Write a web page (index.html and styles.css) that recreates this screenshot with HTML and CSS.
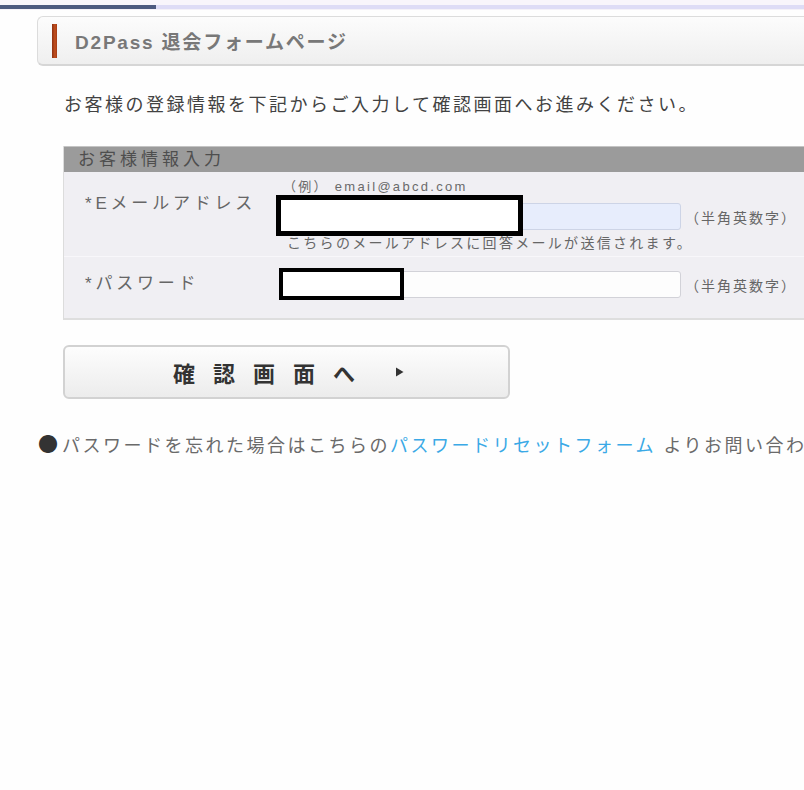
FILE: index.html
```html
<!DOCTYPE html>
<html lang="ja">
<head>
<meta charset="utf-8">
<title>D2Pass 退会フォームページ</title>
<link rel="stylesheet" href="styles.css">
</head>
<body>
<div class="topbar"><div class="progress"></div></div>
<div class="page">
  <div class="header">
    <span class="accent"></span>
    <h1 class="title">D2Pass 退会フォームページ</h1>
  </div>
  <p class="intro">お客様の登録情報を下記からご入力して確認画面へお進みください。</p>
  <div class="form-table">
    <div class="th">お客様情報入力</div>
    <div class="row row-email">
      <div class="label">*Eメールアドレス</div>
      <div class="field">
        <div class="example">（例） email@abcd.com</div>
        <div class="input-line">
          <div class="input-wrap">
            <div class="input input-blue"></div>
            <div class="redact redact-email"></div>
          </div>
          <span class="note">（半角英数字）</span>
        </div>
        <div class="hint">こちらのメールアドレスに回答メールが送信されます。</div>
      </div>
    </div>
    <div class="row row-pass">
      <div class="label">*パスワード</div>
      <div class="field">
        <div class="input-line">
          <div class="input-wrap">
            <div class="input"></div>
            <div class="redact redact-pass"></div>
          </div>
          <span class="note">（半角英数字）</span>
        </div>
      </div>
    </div>
  </div>
  <div class="button-row">
    <button class="confirm" type="button"><span class="btn-text">確認画面へ</span><svg class="tri" width="9" height="10" viewBox="0 0 9 10"><path d="M1 0.5 L8.5 5 L1 9.5 Z" fill="#333"/></svg></button>
  </div>
  <p class="forgot"><span class="bullet">●</span>パスワードを忘れた場合はこちらの<a class="link" href="#">パスワードリセットフォーム</a> よりお問い合わせください。</p>
</div>
</body>
</html>
```

FILE: styles.css
```css
html, body {
  margin: 0;
  padding: 0;
  background: #fefefe;
  overflow: hidden;
}
body {
  width: 804px;
  height: 790px;
  font-family: "Liberation Sans", "Noto Sans CJK JP", sans-serif;
  color: #555;
}
.topbar {
  height: 5px;
  padding-top: 5px;
  background: linear-gradient(#f8f5fb 0, #f8f5fb 5px, #dedcf6 5px, #dedcf6 9px, #f4f1f8 9px);
}
.progress {
  width: 156px;
  height: 4px;
  background: #4d5a80;
}
.page {
  padding-left: 37px;
}
.header {
  margin-top: 6px;
  height: 47px;
  border: 1px solid #dcdcdc;
  border-right: none;
  border-bottom: 2px solid #d6d6d6;
  border-radius: 6px 0 0 6px;
  background: linear-gradient(#fcfcfc, #efefef);
  display: flex;
  align-items: center;
  padding-left: 14px;
}
.accent {
  width: 5px;
  height: 34px;
  background: linear-gradient(90deg, #8e3010, #c2501f 60%, #a43a14);
  margin-right: 18px;
}
.title {
  margin: 0;
  font-size: 19px;
  font-weight: bold;
  color: #787878;
  letter-spacing: 1.8px;
}
.intro {
  margin: 27px 0 0 27px;
  font-size: 18px;
  line-height: 24px;
  letter-spacing: 2.5px;
  color: #424242;
  white-space: nowrap;
}
.form-table {
  margin: 29px 0 0 26px;
  border-left: 1px solid #dcdcdc;
  border-bottom: 2px solid #dedede;
}
.th {
  height: 25px;
  border-top: 1px solid #c4c4c4;
  background: #9b9b9b;
  color: #4e4e4e;
  font-size: 17px;
  line-height: 25px;
  letter-spacing: 4px;
  padding-left: 14px;
}
.row {
  display: grid;
  grid-template-columns: 213px 1fr;
  background: #f0eff3;
}
.row-pass {
  border-top: 1px solid #f8f7fa;
}
.label {
  padding-left: 21px;
  font-size: 17px;
  line-height: 24px;
  letter-spacing: 3.8px;
  color: #666;
  white-space: nowrap;
}
.row-email .label {
  padding-top: 20px;
}
.row-pass .label {
  padding-top: 15px;
}
.field {
  display: flex;
  flex-direction: column;
}
.row-email .field {
  padding: 7px 0 5px;
}
.row-pass .field {
  padding: 14px 0 20px;
}
.example {
  padding-left: 6px;
  font-size: 13px;
  line-height: 16px;
  letter-spacing: 2.3px;
  color: #6a6a6a;
  margin-bottom: 8px;
  white-space: nowrap;
}
.input-line {
  display: flex;
  align-items: center;
}
.input-wrap {
  position: relative;
  width: 404px;
}
.row-pass .input-wrap {
  width: 401px;
  margin-left: 3px;
}
.input {
  height: 25px;
  border: 1px solid #d2d2d8;
  border-radius: 3px;
  background: #fdfdfd;
}
.input-blue {
  background: #e7edfc;
  border-color: #cdd4e6;
}
.note {
  margin-left: 4px;
  font-size: 14px;
  letter-spacing: 2px;
  color: #666;
  white-space: nowrap;
}
.hint {
  margin-top: 5px;
  padding-left: 10px;
  font-size: 14px;
  line-height: 16px;
  letter-spacing: 2.3px;
  color: #666;
  white-space: nowrap;
}
.redact {
  position: absolute;
  background: #fff;
  border: 5px solid #000;
  box-sizing: border-box;
}
.redact-email {
  left: -1px;
  top: -8px;
  width: 247px;
  height: 41px;
}
.redact-pass {
  left: -1px;
  top: -3px;
  width: 125px;
  height: 32px;
  border-width: 4px;
}
.button-row {
  margin: 25px 0 0 26px;
}
.confirm {
  width: 447px;
  height: 54px;
  border: 2px solid #d2d2d2;
  border-radius: 6px;
  background: linear-gradient(#fdfdfd, #ececec);
  display: flex;
  align-items: center;
  justify-content: center;
  padding: 0 0 0 4px;
  font-family: "Liberation Sans", "Noto Sans CJK JP", sans-serif;
  cursor: pointer;
}
.btn-text {
  font-size: 22px;
  font-weight: bold;
  letter-spacing: 18px;
  color: #333;
}
.tri {
  margin-left: 22px;
}
.forgot {
  margin: 33px 0 0 1px;
  font-size: 18px;
  line-height: 24px;
  letter-spacing: 2.5px;
  color: #6a6a6a;
  white-space: nowrap;
}
.bullet {
  font-family: "Noto Sans CJK JP", sans-serif;
  font-size: 20px;
  color: #333;
  letter-spacing: 0;
  margin-right: 4px;
}
.link {
  color: #3aa9e6;
  text-decoration: none;
}
```
